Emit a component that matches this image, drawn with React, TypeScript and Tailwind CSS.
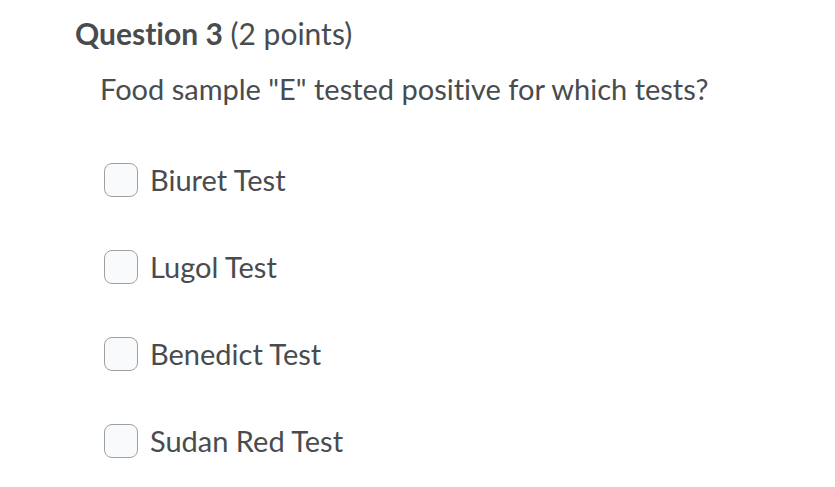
export default function App() {
  const options = ["Biuret Test", "Lugol Test", "Benedict Test", "Sudan Red Test"];
  return (
    <div className="h-[487px] w-[835px] bg-white font-['Lato',sans-serif] text-[#494c4e] [font-variant-ligatures:none]">
      <div className="pl-[75px] pt-[13px]">
        <h2 className="text-[30px] leading-[40px]">
          <span className="font-bold">Question 3</span> (2 points)
        </h2>
        <p className="mt-[16px] pl-[25px] text-[29px] leading-[40px]">
          Food sample "E" tested positive for which tests?
        </p>
        <div className="mt-[51px] flex flex-col gap-[47px] pl-[29px]">
          {options.map((o) => (
            <label key={o} className="flex h-[40px] items-center gap-[12px] text-[29px]">
              <span className="h-[34px] w-[34px] shrink-0 rounded-[8px] border border-[#9ea1a3] bg-[#f9fafc]" />
              {o}
            </label>
          ))}
        </div>
      </div>
    </div>
  );
}
